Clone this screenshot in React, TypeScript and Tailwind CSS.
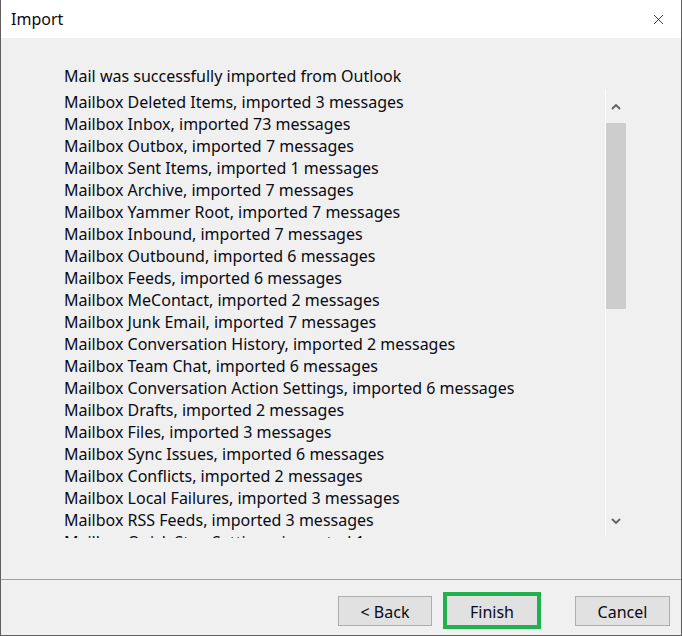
import { X } from "lucide-react";

// folders reported by the import log
const results: Array<[string, number]> = [
  ["Deleted Items", 3],
  ["Inbox", 73],
  ["Outbox", 7],
  ["Sent Items", 1],
  ["Archive", 7],
  ["Yammer Root", 7],
  ["Inbound", 7],
  ["Outbound", 6],
  ["Feeds", 6],
  ["MeContact", 2],
  ["Junk Email", 7],
  ["Conversation History", 2],
  ["Team Chat", 6],
  ["Conversation Action Settings", 6],
  ["Drafts", 2],
  ["Files", 3],
  ["Sync Issues", 6],
  ["Conflicts", 2],
  ["Local Failures", 3],
  ["RSS Feeds", 3],
  ["Quick Step Settings", 1],
  ["Calendar", 4],
];

const font = { fontFamily: '"Noto Sans", "Open Sans", sans-serif' };

function Chevron({ down }: { down?: boolean }) {
  return (
    <svg width="10" height="6" viewBox="0 0 10 6" className="block">
      <path
        d={down ? "M1 1 L5 5 L9 1" : "M1 5 L5 1 L9 5"}
        fill="none"
        stroke="#606060"
        strokeWidth="1.8"
      />
    </svg>
  );
}

export default function App() {
  return (
    <div
      className="w-[682px] h-[636px] flex flex-col border-x border-b border-[#5f5f5f] text-[#0a0a14] text-[16px]"
      style={font}
    >
      <div className="h-[38px] bg-white flex items-center justify-between pl-[10px] pr-[14px]">
        <span className="text-[16px]">Import</span>
        <X size={17} strokeWidth={1.1} />
      </div>

      <div className="flex-1 bg-[#f0f0f0] flex flex-col pt-[26px]">
        <p className="pl-[63px] pt-[1px] leading-[22px] h-[26px]">Mail was successfully imported from Outlook</p>
        <div className="flex h-[446px] mr-[55px]">
          <div className="flex-1 overflow-hidden pl-[63px] pt-[1px] h-[448px]">
            {results.map(([name, count]) => (
              <p key={name} className="leading-[22px] whitespace-nowrap">
                Mailbox {name}, imported {count} messages
              </p>
            ))}
          </div>
          <div className="w-[21px] border-l border-white flex flex-col">
            <div className="h-[33px] flex items-center justify-center">
              <Chevron />
            </div>
            <div className="h-[186px] bg-[#cdcdcd]" />
            <div className="flex-1" />
            <div className="h-[24px] flex items-start justify-center pt-[6px]">
              <Chevron down />
            </div>
          </div>
        </div>
      </div>

      <div className="h-[56px] bg-[#f0f0f0] border-t border-[#a0a0a0] flex items-start justify-end pr-[11px]">
        <button className="mt-[16px] pt-[2px] w-[94px] h-[30px] bg-[#e1e1e1] border border-[#adadad]">&lt; Back</button>
        <button className="mt-[12px] ml-[11px] pt-[2px] w-[98px] h-[37px] bg-[#e1e1e1] border-4 border-[#22b14c]">
          Finish
        </button>
        <button className="mt-[16px] ml-[34px] pt-[2px] w-[95px] h-[30px] bg-[#e1e1e1] border border-[#adadad]">Cancel</button>
      </div>
    </div>
  );
}
